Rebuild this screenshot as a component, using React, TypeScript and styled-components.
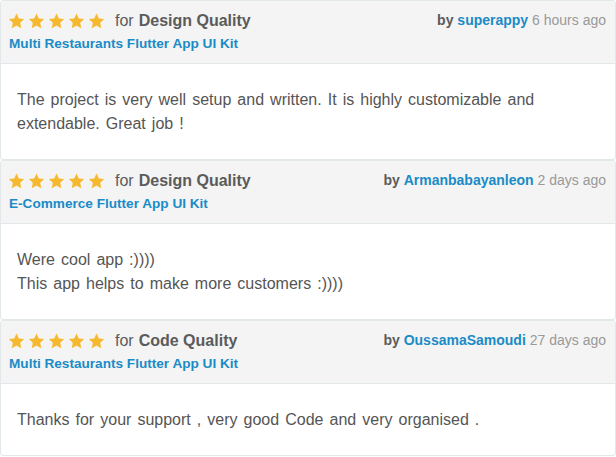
import { FC } from "react";
import styled, { createGlobalStyle } from "styled-components";

const GlobalStyle = createGlobalStyle`
  html, body {
    margin: 0;
    padding: 0;
    background: #fff;
    font-family: "Liberation Sans", Arial, sans-serif;
  }
`;

interface IReview {
  stars: number;
  category: string;
  product: string;
  author: string;
  time: string;
  lines: string[];
}

const REVIEWS: IReview[] = [
  {
    stars: 5,
    category: "Design Quality",
    product: "Multi Restaurants Flutter App UI Kit",
    author: "superappy",
    time: "6 hours ago",
    lines: [
      "The project is very well setup and written. It is highly customizable and extendable. Great job !",
    ],
  },
  {
    stars: 5,
    category: "Design Quality",
    product: "E-Commerce Flutter App UI Kit",
    author: "Armanbabayanleon",
    time: "2 days ago",
    lines: ["Were cool app :))))", "This app helps to make more customers :))))"],
  },
  {
    stars: 5,
    category: "Code Quality",
    product: "Multi Restaurants Flutter App UI Kit",
    author: "OussamaSamoudi",
    time: "27 days ago",
    lines: ["Thanks for your support , very good Code and very organised ."],
  },
];

const List = styled.div`
  width: 616px;
  display: flex;
  flex-direction: column;
`;

const Card = styled.div`
  border: 1px solid #e2e7ea;
  border-radius: 3px;
  background: #fff;
`;

const Header = styled.div`
  display: flex;
  justify-content: space-between;
  align-items: flex-start;
  height: 63px;
  box-sizing: border-box;
  padding: 7px 9px 9px 7px;
  background: #f4f4f4;
  border-bottom: 1px solid #e2e7ea;
  border-radius: 3px 3px 0 0;
`;

const HeaderLeft = styled.div`
  display: flex;
  flex-direction: column;
`;

const TitleRow = styled.div`
  display: flex;
  align-items: center;
  height: 26px;
  font-size: 16px;
  color: #5b5b5b;
`;

const Stars = styled.div`
  display: flex;
  gap: 3px;
  margin-right: 10px;
`;

const Category = styled.span`
  font-weight: bold;
  margin-left: 5px;
`;

const Product = styled.a`
  display: block;
  height: 20px;
  line-height: 20px;
  padding-left: 1px;
  font-size: 13.6px;
  font-weight: bold;
  color: #1a8bc6;
  text-decoration: none;
`;

const Meta = styled.div`
  height: 26px;
  line-height: 24px;
  font-size: 14px;
  color: #999;
`;

const By = styled.span`
  font-weight: bold;
  color: #5b5b5b;
`;

const Author = styled.a`
  font-weight: bold;
  color: #1a8bc6;
  text-decoration: none;
`;

const Body = styled.div`
  padding: 24px 16px 23px 16px;
  font-size: 16px;
  line-height: 24px;
  word-spacing: 1.6px;
  color: #555;
`;

const Star: FC = () => (
  <svg width="17" height="16" viewBox="0 0 24 23">
    <path
      d="M12 0.8l3.3 7.1 7.7 0.9-5.7 5.3 1.5 7.7L12 17.9l-6.8 3.9 1.5-7.7L1 8.8l7.7-0.9z"
      fill="#f6b82d"
    />
  </svg>
);

const ReviewCard: FC<{ data: IReview }> = ({ data }) => (
  <Card>
    <Header>
      <HeaderLeft>
        <TitleRow>
          <Stars>
            {Array.from({ length: data.stars }).map((_, i) => (
              <Star key={i} />
            ))}
          </Stars>
          for<Category>{data.category}</Category>
        </TitleRow>
        <Product href="#">{data.product}</Product>
      </HeaderLeft>
      <Meta>
        <By>by</By> <Author href="#">{data.author}</Author> {data.time}
      </Meta>
    </Header>
    <Body>
      {data.lines.map((line, i) => (
        <div key={i}>{line}</div>
      ))}
    </Body>
  </Card>
);

const App: FC = () => (
  <>
    <GlobalStyle />
    <List>
      {REVIEWS.map((review, i) => (
        <ReviewCard data={review} key={i} />
      ))}
    </List>
  </>
);

export default App;
